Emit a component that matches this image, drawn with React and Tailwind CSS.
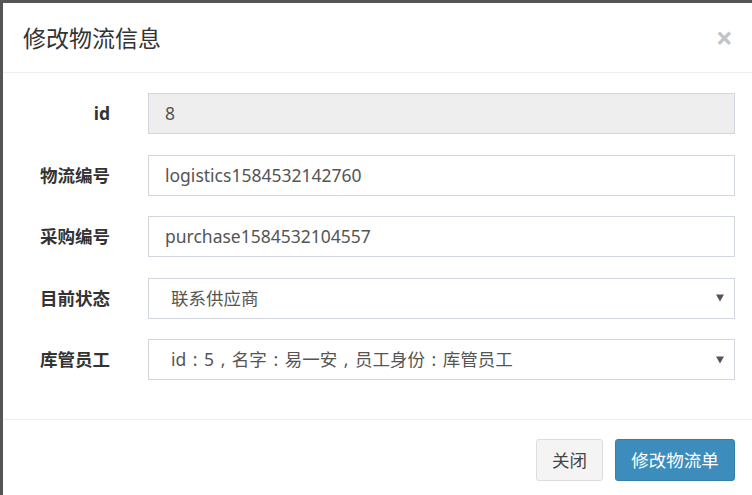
import { useState } from "react";

const font = { fontFamily: '"Noto Sans", "Noto Sans CJK SC", sans-serif' };

function Row(props) {
  return (
    <div className="flex items-center h-[41px]">
      <div className="w-[107px] text-right text-[17.5px] font-bold text-[#333]">
        {props.label}
      </div>
      <div className="flex-1 ml-[38px] h-full">{props.children}</div>
    </div>
  );
}

function SelectBox(props) {
  return (
    <div className="relative h-full border border-[#d2d6de] bg-white flex items-center pl-[22px] text-[17.5px] text-[#555] [word-spacing:2px]">
      <span>{props.value}</span>
      <span className="absolute right-[10px] top-1/2 -translate-y-1/2 w-0 h-0 border-l-[4px] border-r-[4px] border-t-[7px] border-l-transparent border-r-transparent border-t-[#555]" />
    </div>
  );
}

function App() {
  const [open] = useState(true);

  return (
    <div className="w-[752px] h-[495px] bg-[#555] overflow-hidden pl-[3px] pt-[3px]" style={font}>
      {open && (
        <div className="bg-white h-[600px] w-[760px]">
          <div className="flex items-center justify-between h-[70px] border-b border-[#eee] pl-[20px] pr-[30px]">
            <div className="text-[23px] text-[#333] pt-[2px]">修改物流信息</div>
            <div className="text-[30px] text-[#c4c4c4] leading-none font-bold">×</div>
          </div>

          <div className="flex flex-col gap-[20.5px] pt-[20px] pb-[39px] pr-[28px]">
            <Row label="id">
              <div className="h-full border border-[#d2d6de] bg-[#eee] flex items-center pl-[16px] text-[17.5px] text-[#555]">
                8
              </div>
            </Row>
            <Row label="物流编号">
              <div className="h-full border border-[#d2d6de] bg-white flex items-center pl-[16px] text-[17.5px] text-[#555]">
                logistics1584532142760
              </div>
            </Row>
            <Row label="采购编号">
              <div className="h-full border border-[#d2d6de] bg-white flex items-center pl-[16px] text-[17.5px] text-[#555]">
                purchase1584532104557
              </div>
            </Row>
            <Row label="目前状态">
              <SelectBox value="联系供应商" />
            </Row>
            <Row label="库管员工">
              <SelectBox value="id : 5 , 名字 : 易一安 , 员工身份 : 库管员工" />
            </Row>
          </div>

          <div className="border-t border-[#eee] flex justify-end gap-[12px] pt-[19px] pr-[28px]">
            <button className="h-[42px] w-[67px] rounded-[3px] border border-[#ddd] bg-[#f4f4f4] text-[17.5px] text-[#444]">
              关闭
            </button>
            <button className="h-[42px] w-[120px] rounded-[3px] border border-[#367fa9] bg-[#3c8dbc] text-[17.5px] text-white">
              修改物流单
            </button>
          </div>
        </div>
      )}
    </div>
  );
}

export default App;
